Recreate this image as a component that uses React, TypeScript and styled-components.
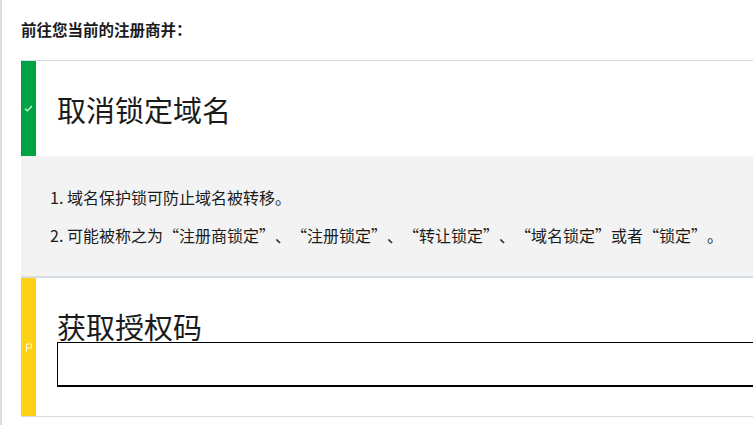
import styled, { createGlobalStyle } from "styled-components";

const GlobalStyle = createGlobalStyle`
  html, body {
    margin: 0;
    padding: 0;
    background: #ffffff;
    overflow: hidden;
  }
  body {
    font-family: "Noto Sans CJK SC", "Liberation Sans", sans-serif;
    color: #1b1b1b;
  }
`;

const Page = styled.div`
  width: 900px;
  min-height: 425px;
  border-left: 2px solid #d6dde4;
  padding-left: 19px;
  box-sizing: border-box;
`;

const Heading = styled.h2`
  margin: 0;
  padding-top: 19px;
  padding-bottom: 21px;
  font-size: 15.5px;
  line-height: 20px;
  font-weight: 700;
  color: #1b1b1b;
`;

const Card = styled.section<{ $last?: boolean }>`
  border-top: 1px solid #d5dce3;
  border-bottom: ${(p) => (p.$last ? "1px solid #dcdcdc" : "none")};
`;

const CardRow = styled.div`
  display: flex;
  align-items: stretch;
`;

const StatusBar = styled.div<{ $color: string }>`
  width: 15px;
  flex-shrink: 0;
  background: ${(p) => p.$color};
  display: flex;
  align-items: center;
  justify-content: center;
`;

const CardHead = styled.div<{ $height?: number }>`
  flex: 1;
  display: flex;
  flex-direction: column;
  padding-left: 21px;
  ${(p) => (p.$height ? `height: ${p.$height}px; justify-content: center;` : "")}
`;

const Title = styled.h3`
  margin: 0;
  font-size: 29px;
  line-height: 32px;
  font-weight: 400;
  color: #1b1b1b;
`;

const CardBody = styled.div`
  background: #f3f3f3;
  padding: 22px 0 22px 29px;
  border-bottom: 1px solid #d5dce3;
`;

const Steps = styled.ol`
  margin: 0;
  padding: 0;
  list-style: none;
`;

const Step = styled.li`
  font-size: 16px;
  line-height: 38px;
  color: #1b1b1b;
  white-space: nowrap;
`;

// quotation marks sit in a full-width cell, opening one pushed right
const Mark = styled.span<{ $open?: boolean }>`
  display: inline-block;
  width: 1em;
  text-align: ${(p) => (p.$open ? "right" : "left")};
`;

const CodeField = styled.div`
  padding: 32px 0 29px;
`;

const CodeInput = styled.input`
  display: block;
  width: 800px;
  height: 45px;
  box-sizing: border-box;
  border: 1px solid #000;
  border-bottom-width: 2px;
  border-right: none;
  background: #fff;
  outline: none;
  font-size: 15px;
  padding: 0 10px;
`;

const Term = ({ children }: { children: string }) => (
  <>
    <Mark $open>“</Mark>
    {children}
    <Mark>”</Mark>
  </>
);

const CheckIcon = () => (
  <svg width="9" height="7" viewBox="0 0 9 7" fill="none">
    <path d="M1 3.6 L3.4 5.8 L8 1" stroke="#e6f7ea" strokeWidth="1.2" />
  </svg>
);

const FlagIcon = () => (
  <svg width="8" height="9" viewBox="0 0 8 9" fill="none">
    <path d="M1.5 8.5 V1 H6.5 V5 H1.5" stroke="#fff7d6" strokeWidth="1" />
  </svg>
);

const App = () => {
  return (
    <Page>
      <GlobalStyle />
      <Heading>前往您当前的注册商并：</Heading>
      <Card>
        <CardRow>
          <StatusBar $color="#00a344">
            <CheckIcon />
          </StatusBar>
          <CardHead $height={95}>
            <Title>取消锁定域名</Title>
          </CardHead>
        </CardRow>
        <CardBody>
          <Steps>
            <Step>1. 域名保护锁可防止域名被转移。</Step>
            <Step>
              2. 可能被称之为<Term>注册商锁定</Term>、<Term>注册锁定</Term>、<Term>转让锁定</Term>、<Term>域名锁定</Term>或者<Term>锁定</Term>。
            </Step>
          </Steps>
        </CardBody>
      </Card>
      <Card $last>
        <CardRow>
          <StatusBar $color="#fcd116">
            <FlagIcon />
          </StatusBar>
          <CardHead>
            <CodeField>
              <Title>获取授权码</Title>
              <CodeInput type="text" aria-label="获取授权码" />
            </CodeField>
          </CardHead>
        </CardRow>
      </Card>
    </Page>
  );
};

export default App;
